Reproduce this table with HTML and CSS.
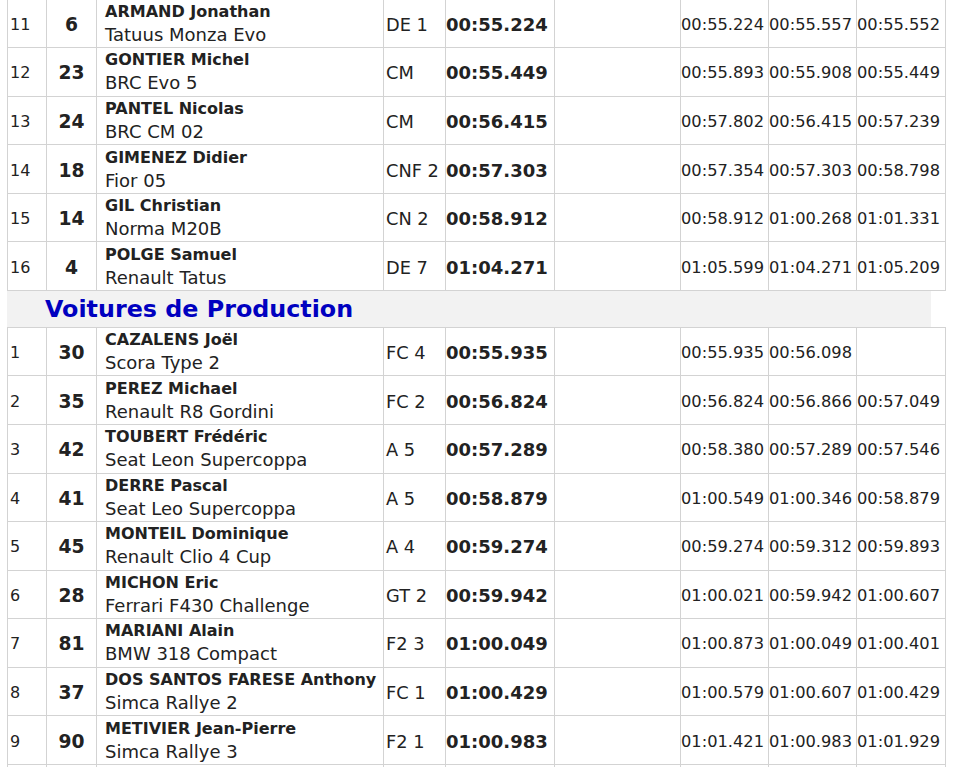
FILE: index.html
```html
<!DOCTYPE html>
<html lang="fr">
<head>
<meta charset="utf-8">
<title>Résultats</title>
<link rel="stylesheet" href="styles.css">
</head>
<body>
<div class="page">
<table class="results">
<colgroup><col class="c-pos"><col class="c-num"><col class="c-drv"><col class="c-cls"><col class="c-best"><col class="c-gap"><col class="c-t"><col class="c-t"><col class="c-t9"></colgroup>
<tbody>
<tr><td class="pos">11</td><td class="num">6</td><td class="drv"><div class="name">ARMAND Jonathan</div><div class="car">Tatuus Monza Evo</div></td><td class="cls">DE 1</td><td class="best">00:55.224</td><td></td><td class="t">00:55.224</td><td class="t">00:55.557</td><td class="t">00:55.552</td></tr>
<tr><td class="pos">12</td><td class="num">23</td><td class="drv"><div class="name">GONTIER Michel</div><div class="car">BRC Evo 5</div></td><td class="cls">CM</td><td class="best">00:55.449</td><td></td><td class="t">00:55.893</td><td class="t">00:55.908</td><td class="t">00:55.449</td></tr>
<tr><td class="pos">13</td><td class="num">24</td><td class="drv"><div class="name">PANTEL Nicolas</div><div class="car">BRC CM 02</div></td><td class="cls">CM</td><td class="best">00:56.415</td><td></td><td class="t">00:57.802</td><td class="t">00:56.415</td><td class="t">00:57.239</td></tr>
<tr><td class="pos">14</td><td class="num">18</td><td class="drv"><div class="name">GIMENEZ Didier</div><div class="car">Fior 05</div></td><td class="cls">CNF 2</td><td class="best">00:57.303</td><td></td><td class="t">00:57.354</td><td class="t">00:57.303</td><td class="t">00:58.798</td></tr>
<tr><td class="pos">15</td><td class="num">14</td><td class="drv"><div class="name">GIL Christian</div><div class="car">Norma M20B</div></td><td class="cls">CN 2</td><td class="best">00:58.912</td><td></td><td class="t">00:58.912</td><td class="t">01:00.268</td><td class="t">01:01.331</td></tr>
<tr><td class="pos">16</td><td class="num">4</td><td class="drv"><div class="name">POLGE Samuel</div><div class="car">Renault Tatus</div></td><td class="cls">DE 7</td><td class="best">01:04.271</td><td></td><td class="t">01:05.599</td><td class="t">01:04.271</td><td class="t">01:05.209</td></tr>
</tbody>
</table>
<h2 class="group">Voitures de Production</h2>
<table class="results">
<colgroup><col class="c-pos"><col class="c-num"><col class="c-drv"><col class="c-cls"><col class="c-best"><col class="c-gap"><col class="c-t"><col class="c-t"><col class="c-t9"></colgroup>
<tbody>
<tr><td class="pos">1</td><td class="num">30</td><td class="drv"><div class="name">CAZALENS Joël</div><div class="car">Scora Type 2</div></td><td class="cls">FC 4</td><td class="best">00:55.935</td><td></td><td class="t">00:55.935</td><td class="t">00:56.098</td><td class="t"></td></tr>
<tr><td class="pos">2</td><td class="num">35</td><td class="drv"><div class="name">PEREZ Michael</div><div class="car">Renault R8 Gordini</div></td><td class="cls">FC 2</td><td class="best">00:56.824</td><td></td><td class="t">00:56.824</td><td class="t">00:56.866</td><td class="t">00:57.049</td></tr>
<tr><td class="pos">3</td><td class="num">42</td><td class="drv"><div class="name">TOUBERT Frédéric</div><div class="car">Seat Leon Supercoppa</div></td><td class="cls">A 5</td><td class="best">00:57.289</td><td></td><td class="t">00:58.380</td><td class="t">00:57.289</td><td class="t">00:57.546</td></tr>
<tr><td class="pos">4</td><td class="num">41</td><td class="drv"><div class="name">DERRE Pascal</div><div class="car">Seat Leo Supercoppa</div></td><td class="cls">A 5</td><td class="best">00:58.879</td><td></td><td class="t">01:00.549</td><td class="t">01:00.346</td><td class="t">00:58.879</td></tr>
<tr><td class="pos">5</td><td class="num">45</td><td class="drv"><div class="name">MONTEIL Dominique</div><div class="car">Renault Clio 4 Cup</div></td><td class="cls">A 4</td><td class="best">00:59.274</td><td></td><td class="t">00:59.274</td><td class="t">00:59.312</td><td class="t">00:59.893</td></tr>
<tr><td class="pos">6</td><td class="num">28</td><td class="drv"><div class="name">MICHON Eric</div><div class="car">Ferrari F430 Challenge</div></td><td class="cls">GT 2</td><td class="best">00:59.942</td><td></td><td class="t">01:00.021</td><td class="t">00:59.942</td><td class="t">01:00.607</td></tr>
<tr><td class="pos">7</td><td class="num">81</td><td class="drv"><div class="name">MARIANI Alain</div><div class="car">BMW 318 Compact</div></td><td class="cls">F2 3</td><td class="best">01:00.049</td><td></td><td class="t">01:00.873</td><td class="t">01:00.049</td><td class="t">01:00.401</td></tr>
<tr><td class="pos">8</td><td class="num">37</td><td class="drv"><div class="name">DOS SANTOS FARESE Anthony</div><div class="car">Simca Rallye 2</div></td><td class="cls">FC 1</td><td class="best">01:00.429</td><td></td><td class="t">01:00.579</td><td class="t">01:00.607</td><td class="t">01:00.429</td></tr>
<tr><td class="pos">9</td><td class="num">90</td><td class="drv"><div class="name">METIVIER Jean-Pierre</div><div class="car">Simca Rallye 3</div></td><td class="cls">F2 1</td><td class="best">01:00.983</td><td></td><td class="t">01:01.421</td><td class="t">01:00.983</td><td class="t">01:01.929</td></tr>
<tr><td class="pos"></td><td class="num"></td><td class="drv"></td><td class="cls"></td><td class="best"></td><td></td><td class="t"></td><td class="t"></td><td class="t"></td></tr>
</tbody>
</table>
</div>
</body>
</html>
```
FILE: styles.css
```css
html, body {
  margin: 0;
  padding: 0;
  background: #ffffff;
}

body {
  font-family: "DejaVu Sans", Verdana, sans-serif;
  color: #222222;
}

.page {
  padding-left: 7px;
  margin-top: -1.4px;
}

.results {
  border-collapse: separate;
  border-spacing: 0;
  table-layout: fixed;
  width: 939px;
  border-top: 1px solid #d3d3d3;
  border-left: 1px solid #d3d3d3;
}

.c-pos { width: 39px; }
.c-num { width: 50px; }
.c-drv { width: 287px; }
.c-cls { width: 62px; }
.c-best { width: 109px; }
.c-gap { width: 126px; }
.c-t { width: 88px; }
.c-t9 { width: 89px; }

.results td {
  border-right: 1px solid #d3d3d3;
  border-bottom: 1px solid #d3d3d3;
  padding: 2px 0 0 0;
  height: 45.56px;
  vertical-align: middle;
  white-space: nowrap;
  overflow: hidden;
}

.results td.pos {
  font-size: 16px;
  padding-left: 2px;
}

.results td.num {
  font-size: 18.7px;
  font-weight: bold;
  text-align: center;
}

.results td.drv {
  padding: 0 0 0 8px;
  height: 47.56px;
}

.name {
  font-size: 16px;
  font-weight: bold;
  line-height: 22px;
}

.car {
  font-size: 18px;
  line-height: 22px;
  padding-top: 1px;
}

.results td.cls {
  font-size: 17.8px;
  padding-left: 2px;
}

.results td.best {
  font-size: 18px;
  font-weight: bold;
}

.results td.t {
  font-size: 16.25px;
}

.group {
  margin: 0;
  width: 886px;
  height: 36px;
  padding-left: 38px;
  background: #f2f2f2;
  color: #0000c0;
  font-size: 23.8px;
  font-weight: bold;
  line-height: 36px;
}
```
